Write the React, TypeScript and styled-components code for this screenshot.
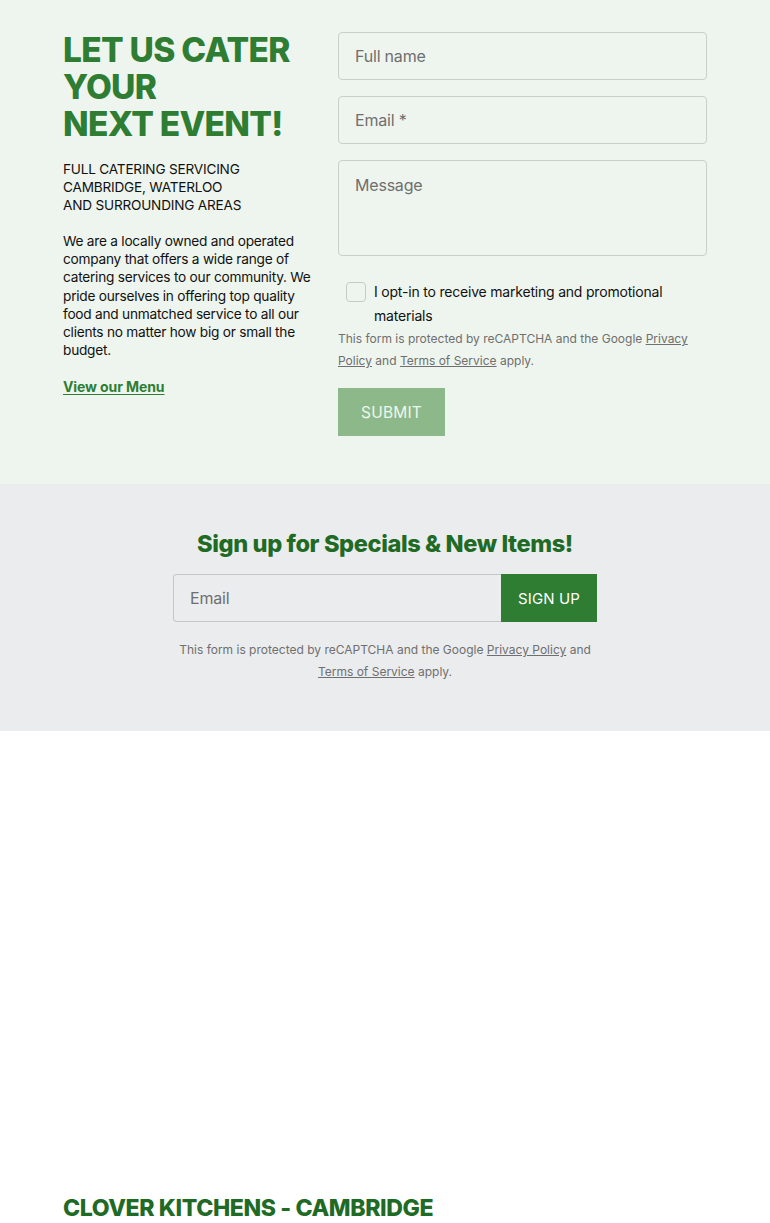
import React from "react"
import styled, { createGlobalStyle } from "styled-components"

const colors = {
  green: "#2e7d32",
  darkGreen: "#1f6a24",
  mint: "#eef5ee",
  grey: "#ebecee",
  text: "#111111",
  muted: "#6f6f6f",
  border: "#c9cfc9",
}

const GlobalStyle = createGlobalStyle`
  html, body {
    margin: 0;
    padding: 0;
    background: #ffffff;
  }
  body {
    font-family: Inter, "Noto Sans", Arial, sans-serif;
    color: ${colors.text};
  }
  * {
    box-sizing: border-box;
  }
`

const CateringSection = styled.section`
  background: ${colors.mint};
  padding: 32px 63px 48px;
`

const Columns = styled.div`
  display: grid;
  grid-template-columns: 255px 1fr;
  column-gap: 20px;
`

const Intro = styled.div`
  display: flex;
  flex-direction: column;
`

const Headline = styled.h1`
  margin: 0 0 17px;
  color: ${colors.green};
  font-size: 33.5px;
  line-height: 37px;
  font-weight: 800;
  letter-spacing: -0.7px;
  text-transform: uppercase;
`

const Areas = styled.p`
  margin: 0 0 18px;
  font-size: 13.6px;
  line-height: 18px;
  text-transform: uppercase;
  letter-spacing: -0.2px;
`

const Blurb = styled.p`
  margin: 0 0 17px;
  font-size: 13.7px;
  line-height: 18.2px;
  letter-spacing: -0.25px;
`

const MenuLink = styled.a`
  color: ${colors.green};
  font-weight: 700;
  font-size: 14px;
  line-height: 18px;
  text-decoration: underline;
  text-underline-offset: 2px;
  letter-spacing: -0.1px;
`

const ContactForm = styled.form`
  display: flex;
  flex-direction: column;
  gap: 16px;
`

const Field = styled.input`
  height: 48px;
  width: 100%;
  padding: 0 16px;
  background: transparent;
  border: 1px solid ${colors.border};
  border-radius: 4px;
  font-family: inherit;
  font-size: 16px;
  color: ${colors.text};
  letter-spacing: -0.2px;

  &::placeholder {
    color: ${colors.muted};
  }
`

const MessageBox = styled.textarea`
  height: 96px;
  width: 100%;
  padding: 14px 16px;
  background: transparent;
  border: 1px solid ${colors.border};
  border-radius: 4px;
  font-family: inherit;
  font-size: 16px;
  letter-spacing: -0.2px;
  resize: none;

  &::placeholder {
    color: ${colors.muted};
  }
`

const OptIn = styled.label`
  display: flex;
  align-items: flex-start;
  gap: 8px;
  margin: 8px 0 0 8px;
  font-size: 14px;
  line-height: 24px;
  letter-spacing: -0.2px;
`

const Box = styled.span`
  flex: none;
  width: 20px;
  height: 20px;
  margin-top: 2px;
  border: 1px solid #c4c9c4;
  border-radius: 4px;
  background: ${colors.mint};
`

const Disclaimer = styled.p<{ $center?: boolean }>`
  margin: ${({ $center }) => ($center ? "17px 0 0" : "-16px 0 0")};
  font-size: 12px;
  line-height: 22px;
  color: ${colors.muted};
  letter-spacing: 0;
  text-align: ${({ $center }) => ($center ? "center" : "left")};

  a {
    color: ${colors.muted};
    text-decoration: underline;
    text-underline-offset: 1px;
  }
`

const SubmitButton = styled.button`
  align-self: flex-start;
  width: 107px;
  height: 48px;
  border: none;
  background: #8db98a;
  color: #eef6ec;
  font-family: inherit;
  font-size: 15.5px;
  letter-spacing: 0.2px;
`

const SignupSection = styled.section`
  background: ${colors.grey};
  padding: 44px 0 48px;
`

const SignupInner = styled.div`
  width: 424px;
  margin: 0 auto;
`

const SignupTitle = styled.h2`
  margin: 0 0 14px;
  text-align: center;
  color: ${colors.darkGreen};
  font-size: 23.6px;
  line-height: 32px;
  font-weight: 800;
  letter-spacing: -0.4px;
  white-space: nowrap;
`

const SignupRow = styled.div`
  display: flex;
  height: 48px;
`

const SignupInput = styled.input`
  flex: 1;
  min-width: 0;
  padding: 0 16px;
  background: transparent;
  border: 1px solid #c4c6c8;
  border-right: none;
  border-radius: 4px 0 0 4px;
  font-family: inherit;
  font-size: 16px;
  letter-spacing: -0.2px;

  &::placeholder {
    color: ${colors.muted};
  }
`

const SignupButton = styled.button`
  width: 96px;
  border: none;
  background: ${colors.green};
  color: #ffffff;
  font-family: inherit;
  font-size: 15px;
  letter-spacing: 0.1px;
`

const MapArea = styled.div`
  height: 461px;
  background: #ffffff;
`

const LocationSection = styled.section`
  padding: 0 63px 40px;
`

const LocationTitle = styled.h2`
  margin: 0;
  color: ${colors.darkGreen};
  font-size: 23.1px;
  line-height: 32px;
  font-weight: 800;
  letter-spacing: -0.4px;
  text-transform: uppercase;
`

const App = () => {
  return (
    <>
      <GlobalStyle />
      <CateringSection>
        <Columns>
          <Intro>
            <Headline>
              Let us cater
              <br />
              your
              <br />
              next event!
            </Headline>
            <Areas>
              Full catering servicing
              <br />
              Cambridge, Waterloo
              <br />
              and surrounding areas
            </Areas>
            <Blurb>
              We are a locally owned and operated company that offers a wide
              range of catering services to our community. We pride ourselves
              in offering top quality food and unmatched service to all our
              clients no matter how big or small the budget.
            </Blurb>
            <div>
              <MenuLink href="#">View our Menu</MenuLink>
            </div>
          </Intro>
          <ContactForm onSubmit={(e) => e.preventDefault()}>
            <Field placeholder="Full name" />
            <Field placeholder="Email *" />
            <MessageBox placeholder="Message" />
            <OptIn>
              <Box />
              <span>I opt-in to receive marketing and promotional materials</span>
            </OptIn>
            <Disclaimer>
              This form is protected by reCAPTCHA and the Google{" "}
              <a href="#">Privacy Policy</a> and{" "}
              <a href="#">Terms of Service</a> apply.
            </Disclaimer>
            <SubmitButton type="submit">SUBMIT</SubmitButton>
          </ContactForm>
        </Columns>
      </CateringSection>
      <SignupSection>
        <SignupInner>
          <SignupTitle>Sign up for Specials &amp; New Items!</SignupTitle>
          <SignupRow>
            <SignupInput placeholder="Email" />
            <SignupButton>SIGN UP</SignupButton>
          </SignupRow>
          <Disclaimer $center>
            This form is protected by reCAPTCHA and the Google{" "}
            <a href="#">Privacy Policy</a> and{" "}
            <a href="#">Terms of Service</a> apply.
          </Disclaimer>
        </SignupInner>
      </SignupSection>
      <MapArea />
      <LocationSection>
        <LocationTitle>Clover Kitchens - Cambridge</LocationTitle>
      </LocationSection>
    </>
  )
}

export default App
